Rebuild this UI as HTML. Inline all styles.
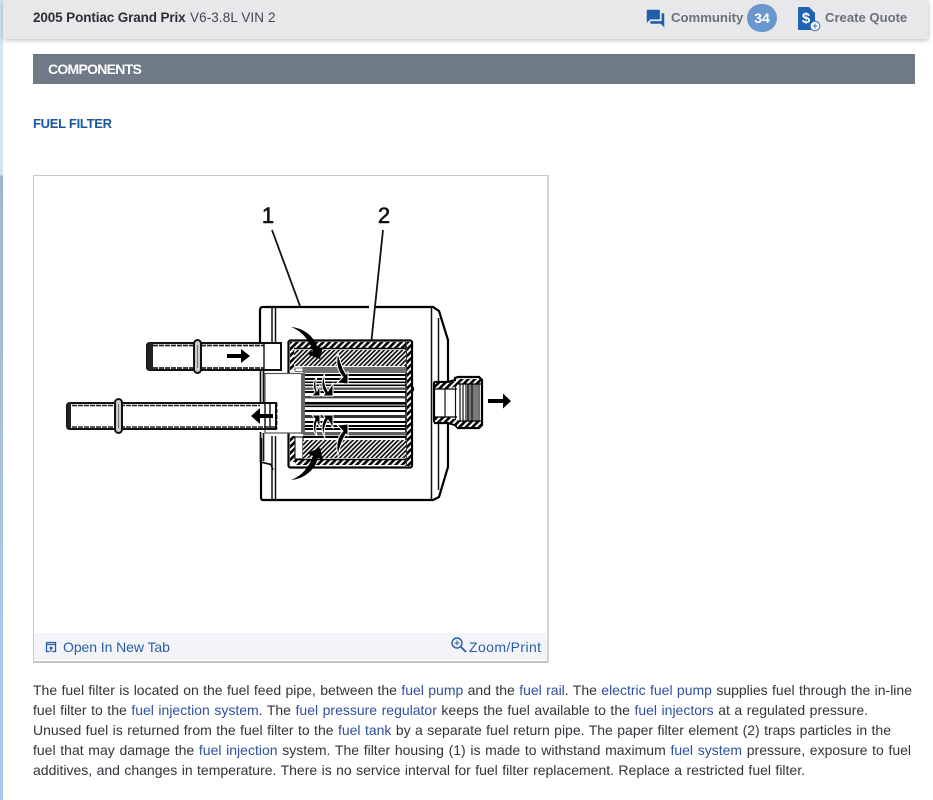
<!DOCTYPE html>
<html lang="en">
<head>
<meta charset="utf-8">
<title>Fuel Filter</title>
<style>
html,body{margin:0;padding:0;width:933px;height:800px;overflow:hidden;background:#fff;font-family:"Liberation Sans",Arial,sans-serif;}
.a{position:absolute;white-space:nowrap;}
#strip{position:absolute;left:0;top:0;width:3px;height:800px;background:linear-gradient(#d5e3f3 0,#d5e3f3 175px,#9fb6d0 176px,#a9c2df 500px,#a8c8ec 620px,#a8c8ec 800px);}
#hdr{position:absolute;left:3px;top:0;width:925px;height:39px;background:#e8e8ea;box-shadow:0 1px 5px rgba(0,0,0,.28);}
#bar{position:absolute;left:33px;top:54px;width:882px;height:30px;background:#6f7a87;}
#box{position:absolute;left:33px;top:175px;width:513px;height:485px;border:1px solid #c9c9c9;border-right:2px solid #d4d4d4;border-bottom:2px solid #c4c4c4;background:#fff;}
#foot{position:absolute;left:34px;top:633px;width:513px;height:27px;background:#f2f4f8;}
.l{position:absolute;left:33px;height:20px;line-height:20px;font-size:14px;color:#33333a;text-align:justify;text-align-last:justify;white-space:nowrap;}
.l a{color:#2f4f9f;text-decoration:none;}
</style>
</head>
<body>
<div id="strip"></div>
<div id="hdr"></div>
<div class="a" style="left:33px;top:10px;line-height:16px;font-size:13.5px;font-weight:bold;color:#2e2e33;letter-spacing:-.12px;">2005 Pontiac Grand Prix</div>
<div class="a" style="left:190px;top:10px;line-height:16px;font-size:13.5px;color:#44444c;letter-spacing:.1px;">V6-3.8L VIN 2</div>

<svg class="a" style="left:645px;top:8px" width="21" height="21" viewBox="0 0 24 24"><path fill="#1f5fae" d="M21 6h-2v9H6v2c0 .55.45 1 1 1h11l4 4V7c0-.55-.45-1-1-1zm-4 6V3c0-.55-.45-1-1-1H3c-.55 0-1 .45-1 1v14l4-4h10c.55 0 1-.45 1-1z"/></svg>
<div class="a" style="left:671px;top:10px;line-height:16px;font-size:13.2px;font-weight:bold;color:#6a7079;letter-spacing:-.03px;">Community</div>
<div class="a" style="left:747px;top:4px;width:30px;height:28px;border-radius:15px;background:#6b97cf;color:#fff;font-size:14px;font-weight:bold;line-height:28px;text-align:center;">34</div>

<svg class="a" style="left:796px;top:5px" width="26" height="28" viewBox="0 0 26 28">
<path fill="#1f63b5" d="M3 2h10l6 6v17H3a1 1 0 0 1-1-1V3a1 1 0 0 1 1-1z"/>
<text x="10" y="18" font-family="Liberation Sans, sans-serif" font-size="15" font-weight="bold" fill="#fff" text-anchor="middle">$</text>
<circle cx="19" cy="21" r="4.800" fill="#fff" stroke="#3b6fc0" stroke-width="1"/>
<path d="M19 18.500v5M16.500 21h5" stroke="#3b6fc0" stroke-width="1" fill="none"/>
</svg>
<div class="a" style="left:825px;top:10px;line-height:16px;font-size:13.1px;font-weight:bold;color:#6a7079;">Create Quote</div>

<div id="bar"></div>
<div class="a" style="left:48px;top:61px;line-height:16px;font-size:14px;font-weight:bold;color:#fff;letter-spacing:-.72px;">COMPONENTS</div>
<div class="a" style="left:33px;top:116px;line-height:16px;font-size:13px;font-weight:bold;color:#1a56a0;letter-spacing:-.28px;">FUEL FILTER</div>

<div id="box"></div>
<div id="foot"></div>

<svg class="a" style="left:34px;top:176px" width="513" height="457" viewBox="34 176 513 457">
<defs>
<pattern id="h1" width="3.200" height="3.200" patternUnits="userSpaceOnUse" patternTransform="rotate(-45)"><rect width="3.200" height="3.200" fill="#fff"/><rect width="3.200" height="1.700" fill="#111"/></pattern>
<pattern id="h2" width="4.600" height="4.600" patternUnits="userSpaceOnUse" patternTransform="rotate(-45)"><rect width="4.600" height="4.600" fill="#fff"/><rect width="4.600" height="2.600" fill="#000"/></pattern>
</defs>
<text x="268" y="223" font-family="Liberation Sans, sans-serif" font-size="22" text-anchor="middle" fill="#111" stroke="#111" stroke-width=".6">1</text>
<text x="384" y="223" font-family="Liberation Sans, sans-serif" font-size="22" text-anchor="middle" fill="#111" stroke="#111" stroke-width=".6">2</text>

<!-- housing -->
<path d="M263 307H433L439 311L448 340V467L439 497L433 500H263Q261 500 261 497V438M260 343V310Q260 307 263 307" fill="#fff" stroke="#000" stroke-width="2.200"/>
<path d="M272 307V343M275.500 307V343M272 436V500M275.500 436V500M431.500 307V500M438.500 318V490" stroke="#111" stroke-width="1.500" fill="none"/>
<path d="M260.500 370V403M260.500 432V462L271 464.500L273 470M263.500 370V403M263.500 433V461" stroke="#111" stroke-width="1.700" fill="none"/>

<!-- leaders (with gap in housing line) -->
<path d="M369 307H375" stroke="#fff" stroke-width="3"/>
<path d="M272 230L300 306M383 230L371.500 340" fill="none" stroke="#111" stroke-width="1.800"/>

<!-- cartridge -->
<rect x="288.500" y="340.500" width="123.500" height="127" rx="2" fill="#fff" stroke="#000" stroke-width="2.200"/>
<rect x="294" y="342" width="112" height="6" fill="url(#h2)"/>
<rect x="290" y="342" width="4.500" height="28" fill="url(#h2)"/>
<rect x="290" y="436" width="5" height="26" fill="url(#h2)"/>
<rect x="407" y="342" width="4" height="124" fill="url(#h2)"/>
<path d="M294 348.500H406M406 342V466" stroke="#000" stroke-width="1.500" fill="none"/>
<rect x="294" y="350" width="112" height="16" fill="url(#h1)"/>
<rect x="303" y="367" width="103" height="6" fill="#707070"/>
<rect x="295" y="368" width="8" height="3.500" fill="#fff" stroke="#555" stroke-width=".8"/>
<rect x="295" y="437" width="8" height="22" fill="#fff" stroke="#222" stroke-width="1.200"/>
<rect x="303" y="440" width="103" height="18" fill="url(#h1)"/>
<rect x="295" y="460" width="111" height="5" fill="url(#h2)"/>
<path d="M295 459.500H406" stroke="#000" stroke-width="1.500"/>
<g fill="#000">
<rect x="303" y="374" width="103" height="2"/>
<rect x="303" y="378" width="103" height="2"/>
<rect x="303" y="381.500" width="103" height="1.600"/>
<rect x="303" y="384.500" width="103" height="1.600"/>
<rect x="303" y="387.500" width="103" height="2.400" fill="#555"/>
<rect x="303" y="391" width="103" height="2"/>
<rect x="303" y="396" width="103" height="2.400" fill="#444"/>
<rect x="303" y="402" width="103" height="2.600"/>
<rect x="303" y="405.500" width="103" height="1.600"/>
<rect x="303" y="410" width="103" height="2"/>
<rect x="303" y="415" width="103" height="3" fill="#333"/>
<rect x="303" y="421" width="103" height="2"/>
<rect x="303" y="425" width="103" height="2"/>
<rect x="303" y="428" width="103" height="2"/>
<rect x="303" y="432" width="103" height="3.400" fill="#606060"/>
<rect x="303" y="436" width="103" height="2"/>
</g>
<path d="M412 386q3.500 3 0 6" fill="#000" stroke="#000"/>

<!-- outlet -->
<path d="M435 382H448L455 380V378L458 377H479L482 380V425L479 428H458L455 425L448 423H435L434 421V383Z" fill="#fff" stroke="#000" stroke-width="2.200"/>
<path d="M435 383H448L457 381V386L448 389H435Z" fill="url(#h2)"/>
<path d="M435 422H448L457 425V420L448 417H435Z" fill="url(#h2)"/>
<rect x="457" y="379" width="24" height="5" fill="url(#h2)"/>
<rect x="457" y="421" width="24" height="6" fill="url(#h2)"/>
<rect x="465" y="384" width="13" height="37" fill="#7a7a7a"/>
<path d="M445 389V417M455.500 386V420M460 384V421M463 384V421M468 384V421M472 384V421M479 384V421" stroke="#111" stroke-width="1.200" fill="none"/>
<path d="M435 389H457M435 417H457M457 384H481M457 421H481" stroke="#000" stroke-width="1.200"/>
<path d="M488 399H503V393.500L511 401L503 408.500V403H488Z" fill="#000"/>

<!-- top pipe -->
<path d="M150 343H281V370H150Q147 370 147 367V346Q147 343 150 343Z" fill="#fff" stroke="#111" stroke-width="2"/>
<path d="M147 346Q147 343 150 343H153V370H150Q147 370 147 367Z" fill="#222"/>
<path d="M153 345.500H264M153 368H264" stroke="#222" stroke-width="1.800" stroke-dasharray="5 1"/>
<path d="M264 343V370" stroke="#111" stroke-width="1.400"/>
<rect x="194" y="340" width="7" height="33" rx="3.500" fill="#ccc" stroke="#111" stroke-width="2"/>
<path d="M197.500 345V368" stroke="#777"/>
<path d="M227 354H241V349L250 356L241 363V358H227Z" fill="#000"/>

<!-- white block -->
<rect x="265" y="373.500" width="37" height="59.500" fill="#fff" stroke="#555" stroke-width="1.200"/>
<rect x="301" y="373" width="4" height="61" fill="#666"/>

<!-- bottom pipe -->
<path d="M70 403H276V429H70Q67 429 67 426V406Q67 403 70 403Z" fill="#fff" stroke="#111" stroke-width="2"/>
<path d="M67 406Q67 403 70 403H71V429H70Q67 429 67 426Z" fill="#222"/>
<path d="M72 405.500H260M72 427H276" stroke="#222" stroke-width="1.600" stroke-dasharray="5 1"/>
<rect x="115" y="399" width="7" height="34" rx="3.500" fill="#ccc" stroke="#111" stroke-width="2"/>
<path d="M118.500 404V428" stroke="#777"/>
<path d="M265 402V430M270 402V430" stroke="#111" stroke-width="1.400"/>
<path d="M276.500 403V429" stroke="#000" stroke-width="1.800" stroke-dasharray="4 2"/>
<path d="M273 414H260V408L251 416L260 424V418H273Z" fill="#000"/>

<!-- flow arrows -->
<g fill="#000" stroke="#fff" stroke-width="1">
<path d="M291 327C304 328 315 337 318 349L323 347L320 359L307 354L313 351C309 340 302 331 291 327Z" stroke="none"/>
<path d="M291 480C304 479 315 470 318 458L323 460L320 448L307 453L313 456C309 467 302 476 291 480Z" stroke="none"/>
<path d="M338 353C335 363 338 372 343 377L337 383L348 384L348 372L346 374C342 368 340 361 338 353Z"/>
<path d="M338 455C335 445 338 436 343 431L337 425L348 424L348 436L346 434C342 440 340 447 338 455Z"/>
<path d="M317 377C315 383 316 388 317 391L320 385V396H312L315 392C313 388 312 382 317 377Z"/>
<path d="M325 373C323 380 325 386 328 391L333 383V396H323L325 393C321 388 321 380 325 373Z"/>
<path d="M317 436C315 430 316 425 317 422L320 428V415H312L315 419C313 423 312 431 317 436Z"/>
<path d="M325 438C323 431 325 425 328 420L333 428V415H323L325 418C321 423 321 431 325 438Z"/>
</g>
</svg>

<svg class="a" style="left:45px;top:641px" width="12" height="12" viewBox="0 0 12 12"><path d="M1.500 1.500H10.500V10.500H7.500M4.500 10.500H1.500V1.500M1.500 3.500H10.500M6 10.500V6M4.500 7.500L6 6L7.500 7.500" fill="none" stroke="#2a5ba8" stroke-width="1.300"/></svg>
<div class="a" style="left:63px;top:639px;line-height:16px;font-size:14px;color:#2a5ba8;letter-spacing:-.07px;">Open In New Tab</div>
<svg class="a" style="left:450px;top:636px" width="17" height="17" viewBox="0 0 17 17"><circle cx="7" cy="7" r="5" fill="none" stroke="#2a5ba8" stroke-width="1.400"/><path d="M11 11L16 16" stroke="#2a5ba8" stroke-width="1.800"/><path d="M7 4.500V9.500M4.500 7H9.500" stroke="#2a5ba8" stroke-width="1"/></svg>
<div class="a" style="left:469px;top:639px;line-height:16px;font-size:14px;color:#2a5ba8;letter-spacing:.4px;">Zoom/Print</div>

<div class="l" style="top:680px;width:879px;">The fuel filter is located on the fuel feed pipe, between the <a>fuel pump</a> and the <a>fuel rail</a>. The <a>electric fuel pump</a> supplies fuel through the in-line</div>
<div class="l" style="top:700px;width:835px;">fuel filter to the <a>fuel injection system</a>. The <a>fuel pressure regulator</a> keeps the fuel available to the <a>fuel injectors</a> at a regulated pressure.</div>
<div class="l" style="top:720px;width:858px;">Unused fuel is returned from the fuel filter to the <a>fuel tank</a> by a separate fuel return pipe. The paper filter element (2) traps particles in the</div>
<div class="l" style="top:740px;width:878px;">fuel that may damage the <a>fuel injection</a> system. The filter housing (1) is made to withstand maximum <a>fuel system</a> pressure, exposure to fuel</div>
<div class="l" style="top:760px;width:772px;">additives, and changes in temperature. There is no service interval for fuel filter replacement. Replace a restricted fuel filter.</div>
</body>
</html>
